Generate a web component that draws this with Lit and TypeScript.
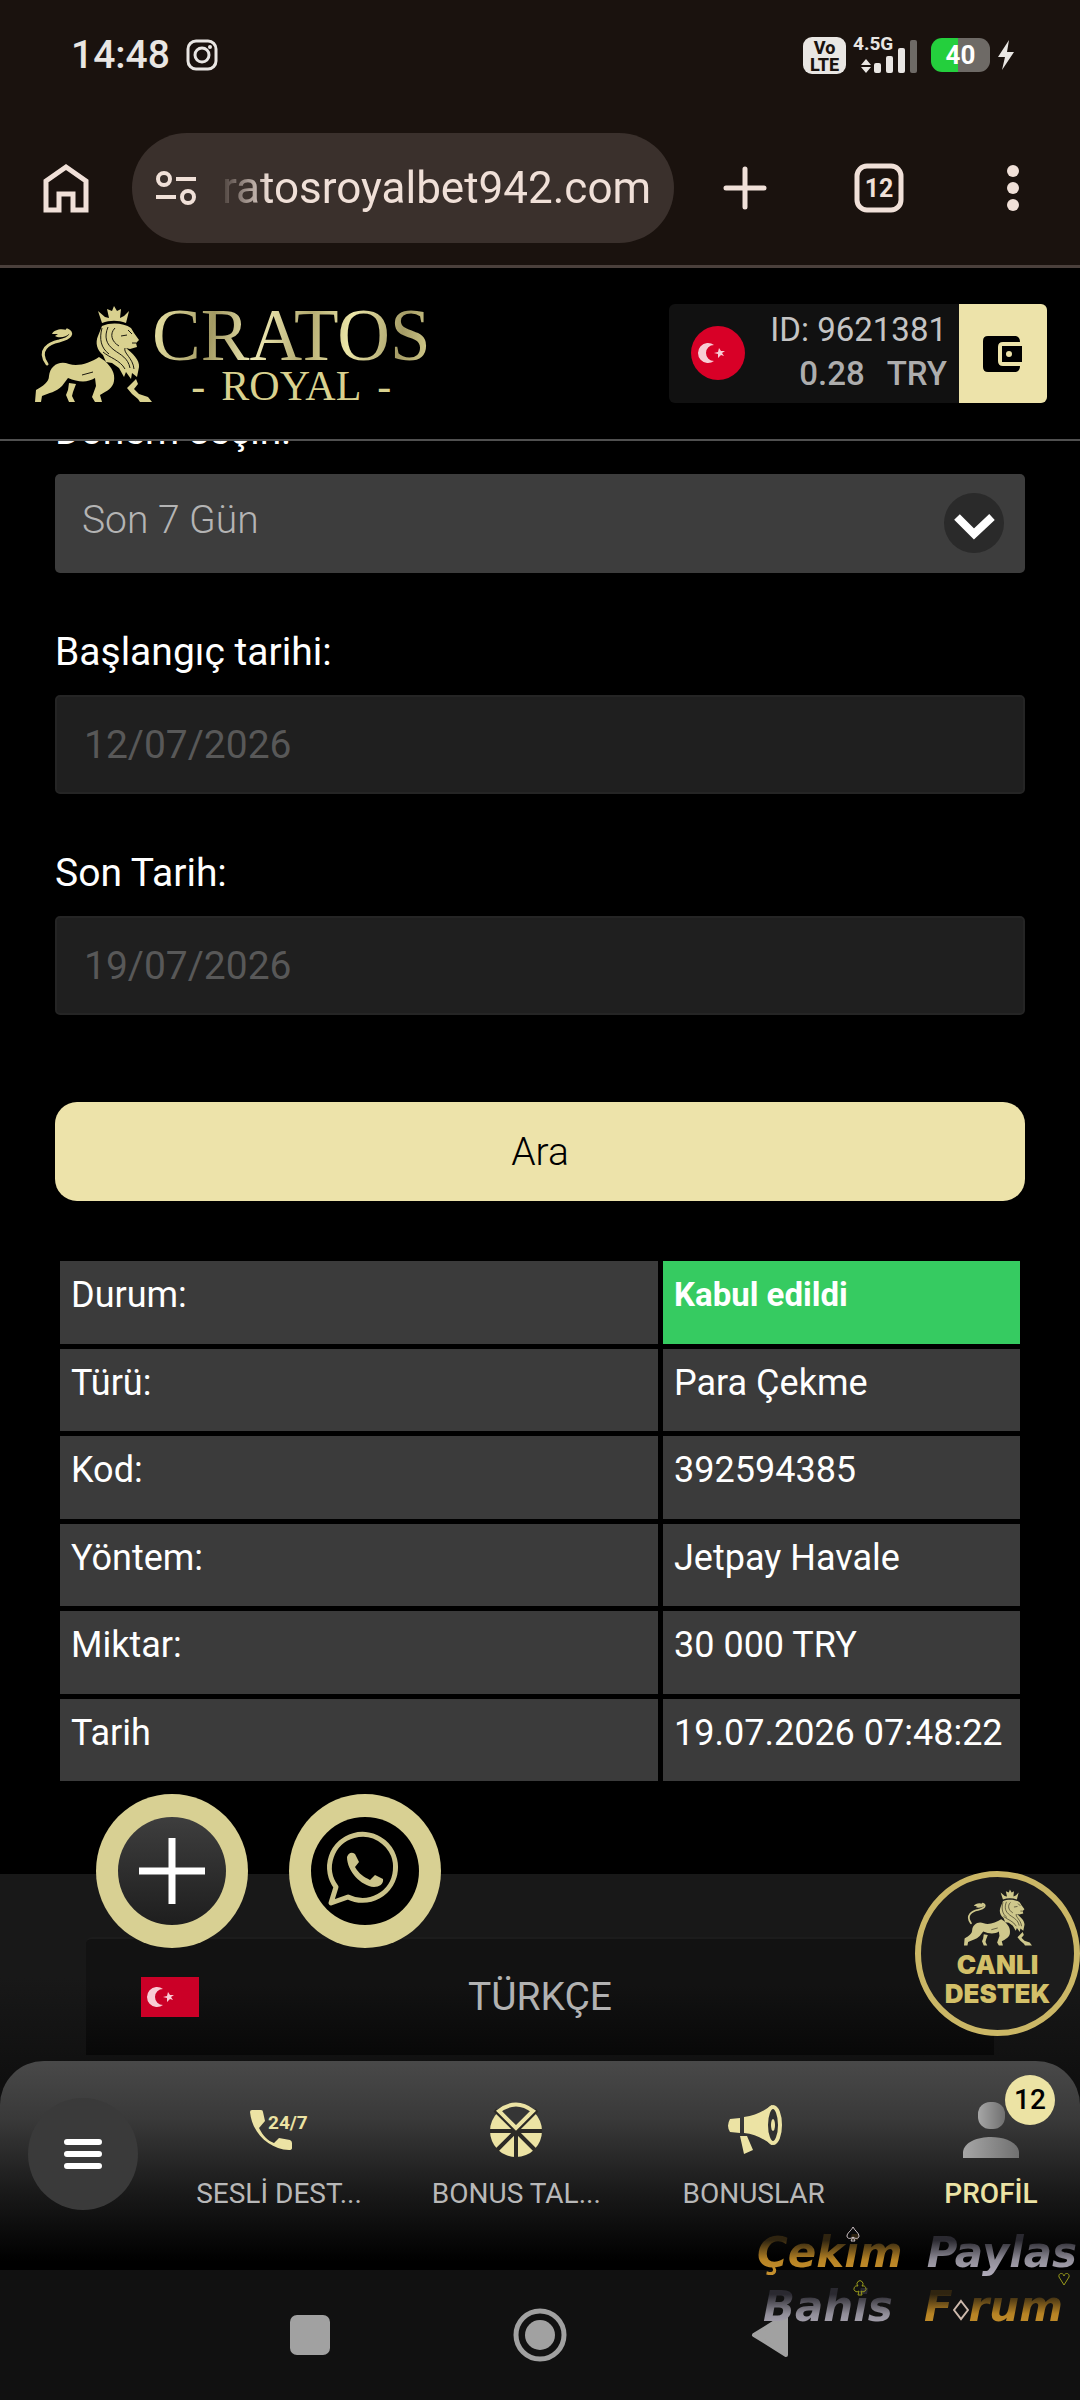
import { LitElement, html, svg, css } from 'lit';
import { customElement, property } from 'lit/decorators.js';

const lion = svg`
  <path fill="none" stroke="currentColor" stroke-width="3" stroke-linecap="round"
    d="M12 58C2 44 14 37 24 35C36 32 39 27 32 24"/>
  <path d="M17 28C20 22 32 22 35 27C31 32 23 32 20 30L23 28Z"/>
  <path d="M67 17L63 5L70 11L74 12L72 3L77 5L79 0L82 5L86 3L85 12L89 10L94 5L91 17C83 14 75 14 67 17Z"/>
  <path d="M67 20C76 16 89 17 96 22L99 27L104 34L101 37L102 41L95 43L91 42C97 47 105 54 104 61L102 71L97 67L96 73L91 66L89 71L84 62L77 57L71 56L68 49C62 44 60 37 63 30Z"/>
  <path d="M64 51C55 57 43 61 34 58C24 54 15 60 14 70C14 76 8 80 1 84L0 96H6L7 90C14 87 21 86 27 80L33 72C43 76 52 77 60 72L61 80L57 91L60 96H67L65 89C72 85 78 82 79 75C80 67 77 62 70 55Z"/>
  <path d="M34 77L41 78L38 86L37 90L40 96H34L31 89L33 84Z"/>
  <path d="M101 73L92 82L97 88L103 93L105 96H117L113 91L104 88L99 83L103 78Z"/>
  <g fill="none" stroke="#1b190f" stroke-width="1">
    <path d="M67 22C64 33 66 42 74 48M73 21C69 31 71 38 79 44C86 49 93 52 95 62M80 22C74 28 77 36 84 40M68 46C75 52 85 54 90 63M86 30L92 29M97 37L101 37M90 42C88 47 98 52 99 63M93 24L97 28M47 69L58 66"/>
  </g>
`;

const crescent = svg`
  <path fill="#f8ccd5" d="M22 12A10 10 0 1 0 22 28A8 8 0 1 1 22 12Z"/>
  <path fill="#f8ccd5" d="M22 20L26 19L27 15L29 18L33 18L30 20L32 23L29 22L26 25L26 21Z"/>
`;

@customElement('status-bar')
export class StatusBar extends LitElement {
  static styles = css`
    :host {
      display: flex;
      align-items: center;
      height: 110px;
      padding: 0 64px 0 71px;
      background: #1a120e;
      color: #e9e6e3;
      font-family: Roboto, sans-serif;
    }
    .time {
      font-size: 39px;
      font-weight: 500;
      margin-right: 16px;
    }
    .state {
      display: flex;
      align-items: center;
      gap: 6px;
      margin-left: auto;
    }
    .volte {
      width: 43px;
      height: 37px;
      border-radius: 9px;
      background: #e9e6e3;
      color: #1a120e;
      font-size: 18px;
      line-height: 17px;
      font-weight: 800;
      text-align: center;
      padding-top: 2px;
      box-sizing: border-box;
    }
    .battery {
      width: 59px;
      height: 34px;
      border-radius: 11px;
      margin-left: 7px;
      background: linear-gradient(90deg, #24cf3d 45%, #6e6a66 45%);
      color: #fff;
      font-size: 26px;
      font-weight: 700;
      line-height: 35px;
      text-align: center;
    }
  `;

  render() {
    return html`
      <span class="time">14:48</span>
      <svg width="32" height="32" viewBox="0 0 32 32" fill="none" stroke="currentColor" stroke-width="3">
        <rect x="2" y="2" width="28" height="28" rx="8"/>
        <circle cx="16" cy="16" r="7"/>
        <circle cx="24" cy="8" r="2" fill="currentColor" stroke="none"/>
      </svg>
      <div class="state">
        <div class="volte">Vo<br>LTE</div>
        <svg width="66" height="42" viewBox="0 -4 66 42" fill="currentColor">
          <text x="1" y="12" font-size="19" font-weight="700">4.5G</text>
          <path d="M14 21L19 27H9ZM14 35L9 29H19Z"/>
          <rect x="22" y="25" width="7" height="10" rx="2"/>
          <rect x="34" y="18" width="7" height="17" rx="2"/>
          <rect x="46" y="10" width="7" height="25" rx="2"/>
          <rect x="58" y="2" width="7" height="33" rx="2" fill="#6e6a66"/>
        </svg>
        <div class="battery">40</div>
        <svg width="20" height="32" viewBox="0 0 20 32" fill="currentColor">
          <path d="M13 1L2 18H9L6 31L18 13H11Z"/>
        </svg>
      </div>
    `;
  }
}

@customElement('browser-bar')
export class BrowserBar extends LitElement {
  static styles = css`
    :host {
      display: flex;
      align-items: center;
      height: 155px;
      border-bottom: 3px solid #4b403c;
      background: #1a120e;
      color: #f0e0d8;
      font-family: Roboto, sans-serif;
    }
    button {
      display: grid;
      place-items: center;
      width: 134px;
      height: 110px;
      padding: 0;
      border: 0;
      background: none;
      color: inherit;
      font-family: inherit;
    }
    .home {
      width: 132px;
    }
    .address {
      display: flex;
      flex: 1;
      align-items: center;
      gap: 24px;
      min-width: 0;
      height: 110px;
      margin-right: 4px;
      padding: 0 20px 0 22px;
      box-sizing: border-box;
      border-radius: 55px;
      background: #3a302c;
    }
    .address svg {
      flex: none;
    }
    input {
      flex: 1;
      min-width: 0;
      padding: 0;
      border: 0;
      background: none;
      color: inherit;
      font: 44px Roboto, sans-serif;
      mask-image: linear-gradient(90deg, rgba(0, 0, 0, 0.1), #000 48px);
    }
  `;

  render() {
    return html`
      <button class="home" aria-label="Ana sayfa">
        <svg width="46" height="50" viewBox="0 0 46 50" fill="none" stroke="currentColor" stroke-width="5">
          <path d="M3 18L23 4L43 18V47H30V31H16V47H3Z"/>
        </svg>
      </button>
      <div class="address">
        <svg width="44" height="36" viewBox="0 0 44 36" fill="none" stroke="currentColor" stroke-width="4">
          <circle cx="10" cy="9" r="6"/>
          <circle cx="34" cy="27" r="6"/>
          <path d="M22 9H42M2 27H22"/>
        </svg>
        <input type="text" aria-label="Adres" readonly value="ratosroyalbet942.com">
      </div>
      <button aria-label="Yeni sekme">
        <svg width="44" height="44" viewBox="0 0 44 44" stroke="currentColor" stroke-width="5" stroke-linecap="round">
          <path d="M22 3V41M3 22H41"/>
        </svg>
      </button>
      <button aria-label="Sekmeler">
        <svg width="50" height="50" viewBox="0 0 50 50">
          <rect x="3" y="3" width="44" height="44" rx="10" fill="none" stroke="currentColor" stroke-width="5"/>
          <text x="25" y="34" fill="currentColor" font-size="25" font-weight="700" text-anchor="middle">12</text>
        </svg>
      </button>
      <button aria-label="Diğer">
        <svg width="12" height="46" viewBox="0 0 12 46" fill="currentColor">
          <circle cx="6" cy="6" r="6"/>
          <circle cx="6" cy="23" r="6"/>
          <circle cx="6" cy="40" r="6"/>
        </svg>
      </button>
    `;
  }
}

@customElement('site-header')
export class SiteHeader extends LitElement {
  static styles = css`
    :host {
      position: relative;
      z-index: 1;
      display: flex;
      align-items: center;
      justify-content: space-between;
      height: 171px;
      padding: 0 33px 0 35px;
      border-bottom: 2px solid #505050;
      background: #000;
      font-family: Roboto, sans-serif;
    }
    .logo {
      display: flex;
      align-items: center;
      color: #d9d18f;
      text-decoration: none;
      font-family: 'Liberation Serif', serif;
    }
    .name {
      display: block;
      font-size: 73px;
      line-height: 64px;
      background: linear-gradient(100deg, #ece6a8, #a39a63 22%, #f0eab4 38%, #b2a96f 55%, #ece6a8 70%, #a59c66 88%, #d9d18f);
      background-clip: text;
      color: transparent;
    }
    .sub {
      display: flex;
      justify-content: center;
      gap: 16px;
      font-size: 42px;
      line-height: 36px;
    }
    .account {
      display: flex;
      height: 99px;
      border-radius: 6px;
      overflow: hidden;
      background: #111;
    }
    .who {
      display: flex;
      align-items: center;
      gap: 24px;
      padding: 0 12px 0 22px;
      color: #c4c4c4;
      font-size: 33px;
      line-height: 44px;
      text-align: right;
    }
    .lines {
      padding-bottom: 4px;
    }
    .balance {
      display: flex;
      justify-content: flex-end;
      gap: 22px;
      color: #adadad;
      font-weight: 500;
    }
    button {
      display: grid;
      place-items: center;
      width: 88px;
      padding: 0;
      border: 0;
      background: #ede3aa;
    }
  `;

  render() {
    return html`
      <a class="logo" href="#">
        <svg width="117" height="96" viewBox="0 0 117 96" fill="currentColor">${lion}</svg>
        <span>
          <span class="name">CRATOS</span>
          <span class="sub"><span>-</span><span>ROYAL</span><span>-</span></span>
        </span>
      </a>
      <div class="account">
        <div class="who">
          <svg width="55" height="55" viewBox="0 0 55 55">
            <circle cx="27" cy="27" r="27" fill="#d80027"/>
            <g transform="translate(1 7)">${crescent}</g>
          </svg>
          <div class="lines">
            <div>ID: 9621381</div>
            <div class="balance"><span>0.28</span><span>TRY</span></div>
          </div>
        </div>
        <button aria-label="Cüzdan">
          <svg width="40" height="36" viewBox="0 0 40 36">
            <path d="M5 0H33Q37 1 37 6H20Q15 6 15 11V25Q15 30 20 30H37Q37 35 33 36H5Q0 36 0 31V5Q0 0 5 0Z"/>
            <path fill-rule="evenodd" d="M19 10H39V26H19ZM26 15A3 3 0 1 0 26 21A3 3 0 1 0 26 15Z"/>
          </svg>
        </button>
      </div>
    `;
  }
}

@customElement('history-form')
export class HistoryForm extends LitElement {
  static styles = css`
    :host {
      display: block;
      font-family: Roboto, sans-serif;
      color: #fff;
    }
    form {
      display: flex;
      flex-direction: column;
      gap: 55px;
    }
    .field {
      display: flex;
      flex-direction: column;
      gap: 19px;
    }
    label {
      font-size: 39px;
      line-height: 48px;
    }
    .select {
      display: grid;
      align-items: center;
    }
    .select > * {
      grid-area: 1 / 1;
    }
    .select svg {
      justify-self: end;
      margin-right: 20px;
      pointer-events: none;
    }
    select,
    input {
      width: 100%;
      height: 99px;
      box-sizing: border-box;
      border-radius: 5px;
      font-family: inherit;
      font-size: 39px;
    }
    select {
      appearance: none;
      padding: 0 100px 8px 27px;
      border: 0;
      background: #3d3d3d;
      color: #b4b4b4;
      font-weight: 300;
    }
    input {
      padding: 0 27px;
      border: 2px solid #252525;
      background: #1f1f1f;
      color: #585858;
    }
    button {
      height: 99px;
      margin-top: 32px;
      border: 0;
      border-radius: 22px;
      background: #ede3aa;
      color: #000;
      font-family: inherit;
      font-size: 39px;
      font-weight: 300;
    }
  `;

  render() {
    return html`
      <form @submit=${(e: Event) => e.preventDefault()}>
        <div class="field">
          <label for="period">Dönem seçin:</label>
          <div class="select">
            <select id="period">
              <option>Son 7 Gün</option>
            </select>
            <svg width="61" height="61" viewBox="0 0 61 61">
              <circle cx="30" cy="30" r="30" fill="#2a2a2a"/>
              <path d="M13 24L30 41L48 24" fill="none" stroke="#fff" stroke-width="8"/>
            </svg>
          </div>
        </div>
        <div class="field">
          <label for="from">Başlangıç tarihi:</label>
          <input id="from" type="text" disabled value="12/07/2026">
        </div>
        <div class="field">
          <label for="to">Son Tarih:</label>
          <input id="to" type="text" disabled value="19/07/2026">
        </div>
        <button type="submit">Ara</button>
      </form>
    `;
  }
}

interface Row {
  name: string;
  value: string;
  accepted?: boolean;
}

@customElement('transaction-table')
export class TransactionTable extends LitElement {
  static styles = css`
    :host {
      display: block;
    }
    table {
      width: 100%;
      height: 530px;
      table-layout: fixed;
      border-spacing: 5px;
      color: #fff;
      font: 36px/48px Roboto, sans-serif;
    }
    th,
    td {
      padding: 10px 11px 0;
      background: #3b3b3b;
      font-weight: 400;
      text-align: left;
      vertical-align: top;
    }
    td {
      width: 335px;
    }
    .accepted {
      background: #36cb61;
      font-size: 33px;
      font-weight: 700;
    }
  `;

  @property({ type: Array })
  rows: Row[] = [];

  render() {
    return html`
      <table>
        ${this.rows.map(row => html`
          <tr>
            <th scope="row">${row.name}</th>
            <td class="${row.accepted ? 'accepted' : ''}">${row.value}</td>
          </tr>
        `)}
      </table>
    `;
  }
}

@customElement('site-footer')
export class SiteFooter extends LitElement {
  static styles = css`
    :host {
      position: relative;
      display: block;
      height: 231px;
      padding: 63px 86px 0;
      box-sizing: border-box;
      background: linear-gradient(#181818 45%, #0f0f0f 90%);
      font-family: Roboto, sans-serif;
    }
    .language {
      display: grid;
      grid-template-columns: 58px 1fr 58px;
      align-items: center;
      width: 100%;
      height: 118px;
      padding: 0 55px;
      box-sizing: border-box;
      border: 0;
      border-top: 2px solid #1c1c1c;
      border-radius: 6px 6px 0 0;
      background: linear-gradient(#121212 40%, #080808);
      color: #b2b2b2;
      font-family: inherit;
      font-size: 39px;
    }
    .floating {
      position: absolute;
      top: -80px;
      left: 96px;
      display: flex;
      gap: 41px;
    }
    .round {
      display: grid;
      place-items: center;
      width: 152px;
      height: 154px;
      padding: 0;
      border: 0;
      border-radius: 50%;
      background: #d8d093;
    }
    .support {
      position: absolute;
      top: -3px;
      right: 0;
      display: flex;
      flex-direction: column;
      align-items: center;
      width: 165px;
      height: 165px;
      padding: 12px 0 0;
      box-sizing: border-box;
      border: 6px solid #cbb766;
      border-radius: 50%;
      background: #1c1c1c;
      color: #d3c069;
      font: 900 26px/29px Inter, sans-serif;
    }
    .support svg {
      margin-bottom: 4px;
      color: #cfc88c;
    }
  `;

  render() {
    return html`
      <button class="language">
        <svg width="58" height="40" viewBox="0 0 58 40">
          <rect width="58" height="40" fill="#cb0027"/>
          ${crescent}
        </svg>
        <span>TÜRKÇE</span>
      </button>
      <div class="floating">
        <button class="round" aria-label="Ekle">
          <svg width="110" height="110" viewBox="0 0 110 110">
            <defs>
              <linearGradient id="knob" x2="0" y2="1">
                <stop stop-color="#3e3e3e"/>
                <stop offset="1" stop-color="#1e1e1e"/>
              </linearGradient>
            </defs>
            <circle cx="55" cy="55" r="54" fill="url(#knob)"/>
            <path d="M55 22V88M22 55H88" stroke="#fff" stroke-width="7"/>
          </svg>
        </button>
        <button class="round" aria-label="WhatsApp">
          <svg width="110" height="110" viewBox="0 0 110 110">
            <circle cx="55" cy="55" r="54"/>
            <path fill="none" stroke="#cbc38a" stroke-width="5" stroke-linejoin="round"
              d="M21 87L26 71A33 33 0 1 1 38 81Z"/>
            <path fill="#cbc38a" d="M37 41C39 36 42 36 45 38L49 46L45 51C49 58 54 61 60 64L65 59L73 63C74 68 69 71 64 71C51 70 37 55 37 41Z"/>
          </svg>
        </button>
      </div>
      <button class="support">
        <svg width="68" height="57" viewBox="0 0 117 96" fill="currentColor">${lion}</svg>
        <span>CANLI</span>
        <span>DESTEK</span>
      </button>
    `;
  }
}

@customElement('bottom-nav')
export class BottomNav extends LitElement {
  static styles = css`
    :host {
      position: relative;
      display: block;
      margin-top: -44px;
      border-radius: 44px 44px 0 0;
      background: linear-gradient(#494949, #393939 28%, #1a1a1a 62%, #000 96%);
    }
    nav {
      display: flex;
      height: 209px;
      font: 28px/32px Roboto, sans-serif;
    }
    .menu {
      display: grid;
      place-items: center;
      width: 110px;
      height: 112px;
      margin: 37px 52px 0 28px;
      padding: 0;
      border: 0;
      border-radius: 50%;
      background: #3a3a3a;
    }
    .links {
      display: flex;
      flex: 1;
      justify-content: space-between;
    }
    a {
      position: relative;
      display: flex;
      flex-direction: column;
      align-items: center;
      gap: 20px;
      width: 178px;
      padding-top: 41px;
      box-sizing: border-box;
      color: #b8b8b8;
      text-decoration: none;
    }
    a svg {
      color: #ece3a4;
    }
    .active {
      color: #ece3a4;
      font-weight: 500;
    }
    .badge {
      position: absolute;
      top: 14px;
      left: 103px;
      width: 50px;
      height: 50px;
      border-radius: 50%;
      background: #ece3a4;
      color: #000;
      line-height: 50px;
      text-align: center;
    }
  `;

  render() {
    return html`
      <nav>
        <button class="menu" aria-label="Menü">
          <svg width="40" height="32" viewBox="0 0 40 32" stroke="#fff" stroke-width="6" stroke-linecap="round">
            <path d="M4 4H36M4 16H36M4 28H36"/>
          </svg>
        </button>
        <div class="links">
          <a href="#">
            <svg width="60" height="56" viewBox="0 0 60 56" fill="currentColor">
              <path d="M3 8H12Q14 8 14 10L16 19L10 26C14 34 19 39 25 41L30 36L41 38Q43 39 43 41V46Q43 48 40 48C20 47 3 31 1 10Q1 8 3 8Z"/>
              <text x="19" y="27" font-family="Roboto" font-size="19" font-weight="700">24/7</text>
            </svg>
            <span>SESLİ DEST...</span>
          </a>
          <a href="#">
            <svg width="52" height="56" viewBox="0 0 52 56">
              <circle cx="26" cy="29" r="26" fill="currentColor"/>
              <g stroke="#2c2a26" stroke-width="4">
                <path d="M0 29H52M26 29V56M26 29L7 48M26 29L45 48M26 29L5 8M26 29L47 8"/>
              </g>
              <path fill="#353535" stroke="currentColor" stroke-width="4" d="M9 9Q26 -4 43 9L26 26Z"/>
            </svg>
            <span>BONUS TAL...</span>
          </a>
          <a href="#">
            <svg width="56" height="56" viewBox="0 0 56 56" fill="currentColor">
              <path d="M4 17L14 16V31L4 30Q0 24 4 17ZM18 15C30 14 39 8 46 3V43C38 37 29 32 18 31ZM14 34H21L27 48L18 52Z"/>
              <ellipse cx="47" cy="23" rx="7" ry="18" fill="#303030" stroke="currentColor" stroke-width="4"/>
              <ellipse cx="47" cy="23" rx="2" ry="6"/>
            </svg>
            <span>BONUSLAR</span>
          </a>
          <a href="#" class="active">
            <svg width="56" height="56" viewBox="0 0 56 56">
              <defs>
                <linearGradient id="person" x2="1">
                  <stop stop-color="#a6a6a6"/>
                  <stop offset="1" stop-color="#707070"/>
                </linearGradient>
              </defs>
              <rect x="15" y="0" width="27" height="27" rx="12" fill="url(#person)"/>
              <path fill="url(#person)" d="M0 56V50C1 40 15 35 28 35C41 35 55 40 56 50V56Z"/>
            </svg>
            <span>PROFİL</span>
            <span class="badge">12</span>
          </a>
        </div>
      </nav>
    `;
  }
}

@customElement('forum-watermark')
export class ForumWatermark extends LitElement {
  static styles = css`
    :host {
      position: absolute;
      right: 3px;
      bottom: 66px;
      font: italic 700 42px/54px 'DejaVu Sans', sans-serif;
      pointer-events: none;
    }
    .line {
      display: flex;
      align-items: center;
      justify-content: space-between;
      width: 320px;
    }
    .line + .line {
      padding: 0 14px 0 6px;
      width: 300px;
    }
    .gold,
    .silver {
      position: relative;
    }
    .gold span,
    .silver span {
      background-clip: text;
      color: transparent;
    }
    .gold span {
      background-image: linear-gradient(#2f2410 25%, #b78324 65%, #c99330);
    }
    .silver span {
      background-image: linear-gradient(#2a2930 25%, #908d98 65%, #b5b0be);
    }
    .suit {
      position: absolute;
      top: 0;
      right: 42px;
    }
    .heart {
      top: 46px;
      right: 7px;
    }
    .club {
      right: 26px;
    }
  `;

  render() {
    return html`
      <div class="line">
        <div class="gold">
          <span>Çekim</span>
          <svg class="suit" width="14" height="16" viewBox="0 0 14 16" fill="none" stroke="#cfc3c6">
            <path d="M7 1C5 5 1 7 1 10S5 13 7 11C9 13 13 13 13 10S9 5 7 1ZM7 11L5 15H9Z"/>
          </svg>
        </div>
        <div class="silver">
          <span>Paylas</span>
          <svg class="suit heart" width="12" height="14" viewBox="0 0 12 14" fill="none" stroke="#989a1c">
            <path d="M6 13L1 5C0 1 5 0 6 4C7 0 12 1 11 5Z"/>
          </svg>
        </div>
      </div>
      <div class="line">
        <div class="silver">
          <span>Bahis</span>
          <svg class="suit club" width="14" height="16" viewBox="0 0 14 16" fill="none" stroke="#989a1c">
            <path d="M5 6A3 3 0 1 1 9 6A3 3 0 1 1 8 11L9 15H5L6 11A3 3 0 1 1 5 6Z"/>
          </svg>
        </div>
        <div class="gold">
          <span>F</span><svg width="16" height="22" viewBox="0 0 16 22" fill="none" stroke="#cdb9ac" stroke-width="2">
            <path d="M8 2L15 11L8 20L1 11Z"/>
          </svg><span>rum</span>
        </div>
      </div>
    `;
  }
}

@customElement('app-root')
export class AppRoot extends LitElement {
  static styles = css`
    :host {
      position: relative;
      display: flex;
      flex-direction: column;
      min-height: 100vh;
      background: #111;
    }
    main {
      display: flex;
      flex-direction: column;
      gap: 55px;
      margin-top: -34px;
      padding: 0 55px 88px;
      background: #000;
    }
    .system {
      display: flex;
      flex: 1;
      align-items: center;
      justify-content: center;
      gap: 176px;
      min-height: 130px;
      background: #111;
    }
    .system button {
      display: grid;
      place-items: center;
      width: 54px;
      height: 54px;
      padding: 0;
      border: 0;
      background: none;
      color: #a1a1a1;
    }
  `;

  private _rows: Row[] = [
    { name: 'Durum:', value: 'Kabul edildi', accepted: true },
    { name: 'Türü:', value: 'Para Çekme' },
    { name: 'Kod:', value: '392594385' },
    { name: 'Yöntem:', value: 'Jetpay Havale' },
    { name: 'Miktar:', value: '30 000 TRY' },
    { name: 'Tarih', value: '19.07.2026 07:48:22' },
  ];

  render() {
    return html`
      <status-bar></status-bar>
      <browser-bar></browser-bar>
      <site-header></site-header>
      <main>
        <history-form></history-form>
        <transaction-table .rows=${this._rows}></transaction-table>
      </main>
      <site-footer></site-footer>
      <bottom-nav></bottom-nav>
      <div class="system">
        <button aria-label="Son uygulamalar">
          <svg width="40" height="40" viewBox="0 0 40 40" fill="currentColor">
            <rect width="40" height="40" rx="7"/>
          </svg>
        </button>
        <button aria-label="Ana ekran">
          <svg width="54" height="54" viewBox="0 0 54 54" fill="currentColor">
            <circle cx="27" cy="27" r="24" fill="none" stroke="currentColor" stroke-width="5"/>
            <circle cx="27" cy="27" r="15"/>
          </svg>
        </button>
        <button aria-label="Geri">
          <svg width="38" height="46" viewBox="0 0 38 46" fill="currentColor" stroke="currentColor" stroke-width="4" stroke-linejoin="round">
            <path d="M3 23L35 3V43Z"/>
          </svg>
        </button>
      </div>
      <forum-watermark></forum-watermark>
    `;
  }
}

declare global {
  interface HTMLElementTagNameMap {
    'app-root': AppRoot
  }
}
